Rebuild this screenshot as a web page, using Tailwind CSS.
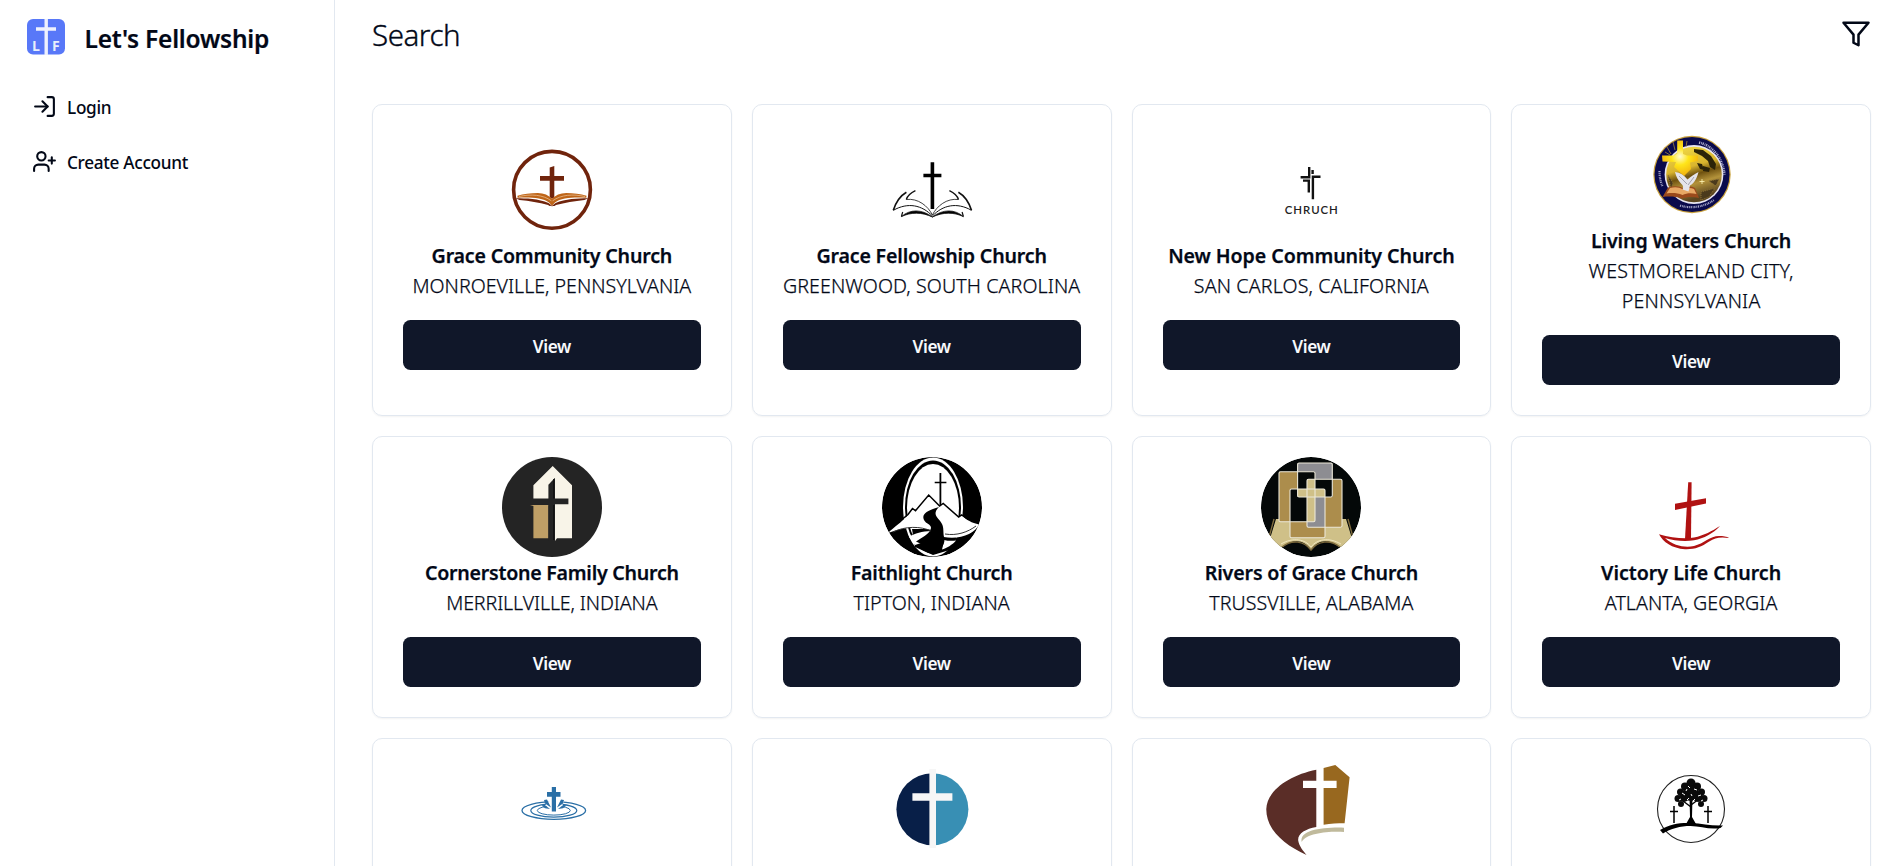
<!DOCTYPE html>
<html lang="en">
<head>
<meta charset="utf-8">
<title>Let's Fellowship</title>
<script src="https://cdn.jsdelivr.net/npm/@tailwindcss/browser@4"></script>
</head>
<body class="flex h-screen overflow-hidden bg-white font-['Noto_Sans','Open_Sans',sans-serif] text-[#020817]">

<aside class="w-[335px] shrink-0 border-r border-[#e2e8f0] pl-[27px] pt-[19px]">
  <div class="flex h-9 items-start">
    <svg class="h-9 w-[38px] shrink-0" viewBox="0 0 38 36">
      <rect width="38" height="35.6" rx="6" fill="#5878f8"/>
      <path d="M19.2 0v36M9 10h20" stroke="#eef1fd" stroke-width="3.4"/>
      <text x="5" y="31.5" font-family="Open Sans, sans-serif" font-weight="700" font-size="14" fill="#e8eefc">L</text>
      <text x="25" y="31.5" font-family="Open Sans, sans-serif" font-weight="700" font-size="14" fill="#e8eefc">F</text>
    </svg>
    <h1 class="ml-[19.5px] mt-px whitespace-nowrap text-[24.5px] font-semibold leading-[38px] tracking-[-0.23px] [-webkit-text-stroke:0.2px]">Let's Fellowship</h1>
  </div>
  <nav class="mt-[39px] flex flex-col gap-[30px] pl-[5px] text-[17.2px] font-medium">
    <a class="flex h-[25px] items-center gap-[10px]">
      <svg class="size-[25px]" viewBox="0 0 24 24" fill="none" stroke="currentColor" stroke-width="2" stroke-linecap="round" stroke-linejoin="round"><path d="M15 3h4a2 2 0 0 1 2 2v14a2 2 0 0 1-2 2h-4"/><path d="m10 17 5-5-5-5"/><path d="M15 12H3"/></svg>
      <span class="mt-[3px] tracking-[-0.3px]">Login</span>
    </a>
    <a class="flex h-[25px] items-center gap-[10px]">
      <svg class="size-[25px]" viewBox="0 0 24 24" fill="none" stroke="currentColor" stroke-width="2" stroke-linecap="round" stroke-linejoin="round"><path d="M16 21v-2a4 4 0 0 0-4-4H6a4 4 0 0 0-4 4v2"/><circle cx="9" cy="7" r="4"/><path d="M19 8v6M22 11h-6"/></svg>
      <span class="mt-[3px] tracking-[-0.3px]">Create Account</span>
    </a>
  </nav>
</aside>

<main class="flex min-w-0 flex-1 flex-col pl-[37px] pr-5">
  <header class="flex h-[104px] shrink-0 items-start justify-between pt-[12px]">
    <h2 class="text-[29.5px] font-light leading-[45px] tracking-[-0.45px] [-webkit-text-stroke:0.35px]">Search</h2>
    <svg class="mt-[7px] size-[30px]" viewBox="0 0 24 24" fill="none" stroke="currentColor" stroke-width="2" stroke-linecap="round" stroke-linejoin="round"><path d="M22 3H2l8 9.46V19l4 2v-8.54L22 3z"/></svg>
  </header>

  <div class="grid grid-cols-4 gap-5 text-center text-[19.6px] leading-[30px] [-webkit-text-stroke:0.25px]">

    <section class="flex h-[312px] flex-col items-center justify-center rounded-[10px] border border-[#e2e8f0] px-[30px] pb-[10px] shadow-[0_1px_2px_rgba(0,0,0,0.05)]">
      <svg class="mb-px size-[100px] shrink-0" viewBox="0 0 100 100">
        <circle cx="50" cy="49.8" r="38.4" fill="none" stroke="#70240c" stroke-width="3.6"/>
        <path d="M47.7 27.5l4.6-1.6V36H62v4.8h-9.7v16.6L50 58.8l-2.3-1.6V40.8H38V36h9.7z" fill="#70240c"/>
        <path d="M13.5 58.3c11 0 23 .5 33 4.6l3.5 2.8 3.6-2.8c9.8-4 21.4-4.6 32.8-4.6l-4 1.6c-10 1-19.5 2.7-28.5 5.2-1 1.6-6.6 1.6-7.8 0-9.5-2.8-18.3-4.2-28.6-5.2z" fill="#70240c"/>
        <path d="M15.5 55.8c6-2 13-2.6 20.3-2.8 6 .2 11 2.2 14.2 5.8 3.3-3.6 8.3-5.6 14.2-5.8 7.3 0 14.3.8 20.3 2.8l-.2 1.9c-10.4-.8-25.3-.4-31.3 4.7L50 65.8l-3-3.4c-6-5-21-5.4-31.5-4.7z" fill="#bf6518"/>
        <path d="M17 56.5c12-2.7 24-1.8 32.4 4.3M83 56.5c-12-2.7-24-1.8-32.4 4.3" fill="none" stroke="#f4d9b8" stroke-width=".6"/>
      </svg>
      <h3 class="whitespace-nowrap font-semibold tracking-[-0.19px]">Grace Community Church</h3>
      <p class="whitespace-nowrap font-light">MONROEVILLE, PENNSYLVANIA</p>
      <button class="mt-[19px] h-[50px] w-full shrink-0 rounded-[7.5px] bg-[#101729] pt-[3px] text-[17.2px] font-semibold tracking-[-0.35px] text-slate-50 [-webkit-text-stroke:0]">View</button>
    </section>

    <section class="flex h-[312px] flex-col items-center justify-center rounded-[10px] border border-[#e2e8f0] px-[30px] pb-[10px] shadow-[0_1px_2px_rgba(0,0,0,0.05)]">
      <svg class="mb-px size-[100px] shrink-0" viewBox="0 0 100 100">
        <path d="M50.4 22.3V69M41.4 35.5h18" stroke="#000" stroke-width="3.6" fill="none"/>
        <g id="wing" fill="none" stroke="#111" stroke-linejoin="round">
          <path d="M24.4 52.3C18 56 14 62 11.3 70.3" stroke-width="1.6"/>
          <path d="M11.3 70.3C26 62 40 65 50.4 76" stroke-width="1"/>
          <path d="M33.4 50.7C28.5 53 25.5 56 24.3 59.5" stroke-width="1.4"/>
          <path d="M24.3 59.5C36 58 46 66 50.4 75" stroke-width=".8"/>
          <path d="M20.7 72l-1.3 4.500" stroke-width="1.2"/>
          <path d="M19.4 76.6C28 69 40 69 50.4 77C40 72 29 72 19.4 76.6z" fill="#000" stroke-width=".8"/>
        </g>
        <use href="#wing" transform="translate(100.8 0) scale(-1 1)"/>
      </svg>
      <h3 class="whitespace-nowrap font-semibold tracking-[-0.17px]">Grace Fellowship Church</h3>
      <p class="whitespace-nowrap font-light tracking-[0.1px]">GREENWOOD, SOUTH CAROLINA</p>
      <button class="mt-[19px] h-[50px] w-full shrink-0 rounded-[7.5px] bg-[#101729] pt-[3px] text-[17.2px] font-semibold tracking-[-0.35px] text-slate-50 [-webkit-text-stroke:0]">View</button>
    </section>

    <section class="flex h-[312px] flex-col items-center justify-center rounded-[10px] border border-[#e2e8f0] px-[30px] pb-[10px] shadow-[0_1px_2px_rgba(0,0,0,0.05)]">
      <svg class="mb-px size-[100px] shrink-0" viewBox="0 0 100 100">
        <path d="M39.6 37.2h8.600V27M51.600 30v4M59.500 36.700h-7.600v22.500M42 40.600h5.800v12" fill="none" stroke="#111" stroke-width="2.400"/>
        <text x="23.800" y="74" textLength="53" lengthAdjust="spacing" font-family="Lato, sans-serif" font-weight="600" font-size="11.400" fill="#222">CHRUCH</text>
      </svg>
      <h3 class="whitespace-nowrap font-semibold tracking-[-0.07px]">New Hope Community Church</h3>
      <p class="whitespace-nowrap font-light tracking-[0.13px]">SAN CARLOS, CALIFORNIA</p>
      <button class="mt-[19px] h-[50px] w-full shrink-0 rounded-[7.5px] bg-[#101729] pt-[3px] text-[17.2px] font-semibold tracking-[-0.35px] text-slate-50 [-webkit-text-stroke:0]">View</button>
    </section>

    <section class="flex h-[312px] flex-col items-center justify-center rounded-[10px] border border-[#e2e8f0] px-[30px] pb-[10px] shadow-[0_1px_2px_rgba(0,0,0,0.05)]">
      <svg class="mb-px size-[100px] shrink-0" viewBox="0 0 100 100">
        <defs>
          <linearGradient id="globe" x1="0" y1="0" x2=".3" y2="1"><stop offset="0" stop-color="#f6e04a"/><stop offset=".45" stop-color="#d9b52e"/><stop offset=".6" stop-color="#6f5210"/><stop offset=".75" stop-color="#b3923a"/><stop offset="1" stop-color="#5a4520"/></linearGradient>
          <radialGradient id="gold" cx=".5" cy=".45" r=".6"><stop offset="0" stop-color="#fffbd0"/><stop offset=".4" stop-color="#ffe51a"/><stop offset="1" stop-color="#efa90c"/></radialGradient>
        </defs>
        <circle cx="51" cy="49.5" r="38.7" fill="#c9a13c"/>
        <circle cx="51" cy="49.5" r="37.5" fill="#0a0a4c"/>
        <circle cx="53" cy="49.5" r="29.4" fill="#e9e6f2"/>
        <circle cx="53" cy="49.5" r="27.8" fill="url(#globe)"/>
        <path d="M53 24l9 1 8 6 5 8-1 6-5-3-2-6-6-5-8-4zM56 38l5 1 2 6-4-1zM62 41l7 2-1 4-6-1z" fill="#2c2408"/>
        <path d="M60 67l14-4-6 9-8 3zM68 56l10-2-3 7zM27 50l5 8-2 6z" fill="#4b3a1c" stroke="#8f7436" stroke-width="1" stroke-dasharray="1 1"/>
        <path d="M58 17.5C70 20 82 32 83.5 50" fill="none" stroke="#a9a9c9" stroke-width="2.6" stroke-dasharray="1.3 .9 .8 .7"/>
        <path d="M39 80.500C50 84 63 82 73 75" fill="none" stroke="#a9a9c9" stroke-width="2.2" stroke-dasharray="1.2 .9 .8 .7"/>
        <path d="M18.5 46c0 6 1 11 3 15" fill="none" stroke="#a9a9c9" stroke-width="2.2" stroke-dasharray="1.2 .9 .8 .7"/>
        <path d="M26 22l4 7M32 17l2 8M46 16l-1 6M24 27l5 3" stroke="#a58a3a" stroke-width=".8"/>
        <path d="M36.2 15.5H42V29l4 1.500h11V36l-8 1.500L50 44l-7 7-10-9 2-5-13.500-.5-.5-6H33l3.200-2z" fill="url(#gold)"/>
        <path d="M21.5 72L27 62.500c6-2 12-1.500 15.500 1C46 61 50 61 54 63l4 10c-6-1.500-12-1.500-17 .5-6-2-13-2.500-19.500-1.500z" fill="#9b4a1c"/>
        <path d="M25.500 68.500L29 63c5-1.500 9-1 13 1.500 4-2 8-2 11-.5l2.500 5c-5-1-10-1-14 1-5-2-10-2.500-16-1.500z" fill="#e8a865"/>
        <path d="M34 47c5 .5 9 3 12.500 7.500C50 51 54 49 57.500 47c-1.500 6-4 11-8.500 13.500l-1.500 6-6-2c1-2 1-4-1.500-6-3-3-5-7-6-11.500z" fill="#e4e4ea"/>
        <path d="M38 51l8 8M53 52l-6 8" stroke="#9b9ba6" stroke-width=".9"/>
        <path d="M61 54v5M58.500 56.500h5" stroke="#fff6b8" stroke-width=".8"/>
      </svg>
      <h3 class="whitespace-nowrap font-semibold tracking-[-0.13px]">Living Waters Church</h3>
      <p class="font-light tracking-[0.17px]">WESTMORELAND CITY, PENNSYLVANIA</p>
      <button class="mt-[19px] h-[50px] w-full shrink-0 rounded-[7.5px] bg-[#101729] pt-[3px] text-[17.2px] font-semibold tracking-[-0.35px] text-slate-50 [-webkit-text-stroke:0]">View</button>
    </section>

    <section class="flex h-[282px] flex-col items-center rounded-[10px] border border-[#e2e8f0] px-[30px] pt-5 shadow-[0_1px_2px_rgba(0,0,0,0.05)]">
      <svg class="mb-px size-[100px] shrink-0" viewBox="0 0 100 100">
        <circle cx="50" cy="50" r="50" fill="#242424"/>
        <path d="M50.7 9L70 28.300v53H55l-2 2.700V48.500h-2L31.400 47V28.300z" fill="#f8f4e8"/>
        <path d="M28 48h18.400v33.300h-15V49z" fill="#bf9f66"/>
        <path d="M46.400 27.700L53 20.700v20.800h13.400v5.800H53V84h-6.600V48H29.500v-6.500h16.900z" fill="#242424"/>
        <path d="M51.800 22v19.500M51.800 48v35" stroke="#111" stroke-width="1.400"/>
      </svg>
      <h3 class="whitespace-nowrap font-semibold tracking-[-0.25px]">Cornerstone Family Church</h3>
      <p class="whitespace-nowrap font-light tracking-[-0.12px]">MERRILLVILLE, INDIANA</p>
      <button class="mt-[19px] h-[50px] w-full shrink-0 rounded-[7.5px] bg-[#101729] pt-[3px] text-[17.2px] font-semibold tracking-[-0.35px] text-slate-50 [-webkit-text-stroke:0]">View</button>
    </section>

    <section class="flex h-[282px] flex-col items-center rounded-[10px] border border-[#e2e8f0] px-[30px] pt-5 shadow-[0_1px_2px_rgba(0,0,0,0.05)]">
      <svg class="mb-px size-[100px] shrink-0" viewBox="0 0 100 100">
        <clipPath id="fc"><circle cx="50" cy="50" r="50"/></clipPath>
        <g clip-path="url(#fc)">
          <circle cx="50" cy="50" r="50" fill="#000"/>
          <ellipse cx="51" cy="50" rx="30" ry="49.500" fill="#fff"/>
          <ellipse cx="51" cy="50" rx="28" ry="46.500" fill="#000"/>
          <ellipse cx="51" cy="50.500" rx="26" ry="43.500" fill="#fff"/>
          <path d="M30 72h47l-6 20-20 6-18-8z" fill="#000"/>
          <path d="M27 80c6-4 13-5.500 22-6l-10 12-6 2zM62 83c4 1 8 1 12 .5-3 4-10 8-14 9l1-4z" fill="#fff"/>
          <path d="M6 76c6-6 14-11 19-17l5.500-7.500 3 2.200L46.700 38 57.600 49l3.600-2.500L76.700 60l3-2c5 5 10 8 17.300 9.500-4 9-19 15.500-35.300 12.500L49 73C33 68 20 71 6 76z" fill="#fff"/>
          <path d="M18 64l8-6.500 4.500-6 3 2.200L46.700 38l10.900 11 3.600-2.500L76.700 60l3-2 7 5" fill="none" stroke="#000" stroke-width="1.500"/>
          <path d="M57 50C46 53 39 57 42 63c2 4 7 4 7 8-1 6-10 10-15 13.500 7 3 14 8 20 12.500 5-6 10-10 8-17-1-5 0-9-2-13-3-6-11-9-3-17z" fill="#000"/>
          <path d="M11 75c12-6 28-6 38-1M63 77c12 2 23-2 31-8" fill="none" stroke="#333" stroke-width="1"/>
          <path d="M58.400 16v32" stroke="#000" stroke-width="1.800"/>
          <path d="M52.700 25.500h11.700" stroke="#000" stroke-width="1.700"/>
        </g>
      </svg>
      <h3 class="whitespace-nowrap font-semibold tracking-[-0.17px]">Faithlight Church</h3>
      <p class="whitespace-nowrap font-light tracking-[0.06px]">TIPTON, INDIANA</p>
      <button class="mt-[19px] h-[50px] w-full shrink-0 rounded-[7.5px] bg-[#101729] pt-[3px] text-[17.2px] font-semibold tracking-[-0.35px] text-slate-50 [-webkit-text-stroke:0]">View</button>
    </section>

    <section class="flex h-[282px] flex-col items-center rounded-[10px] border border-[#e2e8f0] px-[30px] pt-5 shadow-[0_1px_2px_rgba(0,0,0,0.05)]">
      <svg class="mb-px size-[100px] shrink-0" viewBox="0 0 100 100">
        <clipPath id="rc"><circle cx="50" cy="50" r="50"/></clipPath>
        <g clip-path="url(#rc)">
          <circle cx="50" cy="50" r="50" fill="#040808"/>
          <path d="M15 62h70l8 26-15 2c-10-9-22-7-28 3-6-10-18-12-28-3L7 88z" fill="#cfc088"/>
          <path d="M20 87c12-7 24-5 30 3 6-8 18-10 30-3" fill="none" stroke="#efe6c0" stroke-width="1"/>
          <path d="M13 62L7 84M87 62l6 22M21 90c10-8 22-6 29 3 7-9 19-11 29-3" fill="none" stroke="#7d6a3c" stroke-width="1.400"/>
          <path d="M18 14.700h36v50H18z" fill="#ac8d4c"/>
          <path d="M46 22.300h35v48H46z" fill="#ac8d4c"/>
          <path d="M29 32h35v48.700H29z" fill="#ac8d4c"/>
          <path d="M36.600 6h34.700v34H36.600z" fill="#8d8d92"/>
          <path d="M36.600 14.700H54v7.600h-8V32h-9.400zM54 22.300h17.300V40H64v-8H54zM29 32h7.600v8H46v24.700H29z" fill="#040808"/>
          <path d="M54 40h10v30.300H46v-5.600h8z" fill="#8d8d92"/>
          <path d="M46 22.300h8V32h10v8H54v24.700h-8V40h-9.400v-8H46z" fill="#cfc088"/>
          <g fill="none" stroke="#ece8d8" stroke-width="1.100">
            <rect x="18" y="14.700" width="36" height="50" rx="1.500"/>
            <rect x="36.600" y="6" width="34.700" height="34" rx="1.500"/>
            <rect x="46" y="22.300" width="35" height="48" rx="1.500"/>
            <rect x="29" y="32" width="35" height="48.700" rx="1.500"/>
          </g>
        </g>
      </svg>
      <h3 class="whitespace-nowrap font-semibold tracking-[-0.13px]">Rivers of Grace Church</h3>
      <p class="whitespace-nowrap font-light tracking-[0.06px]">TRUSSVILLE, ALABAMA</p>
      <button class="mt-[19px] h-[50px] w-full shrink-0 rounded-[7.5px] bg-[#101729] pt-[3px] text-[17.2px] font-semibold tracking-[-0.35px] text-slate-50 [-webkit-text-stroke:0]">View</button>
    </section>

    <section class="flex h-[282px] flex-col items-center rounded-[10px] border border-[#e2e8f0] px-[30px] pt-5 shadow-[0_1px_2px_rgba(0,0,0,0.05)]">
      <svg class="mb-px size-[100px] shrink-0" viewBox="0 0 100 100">
        <g fill="#b01212">
          <path d="M47.200 25.300h3.400L50 82h-6z"/>
          <path d="M34 46.700L65 41.300v5.300L34 53z"/>
          <path d="M18 77.300C30 81 45 82 53 80.500 63 78.500 71 74 79 69c-7 7.500-16 12.500-26 14.300-9 1.500-20 .5-29-2.300 9 8 20 10 29 8 10-2.500 16-10 25-10 4 0 8 .5 10.200 2-10-1.500-14 0-20 3.500C60 90 54 92.500 44 92.200 31 91.500 22 85 18 77.300z"/>
        </g>
      </svg>
      <h3 class="whitespace-nowrap font-semibold">Victory Life Church</h3>
      <p class="whitespace-nowrap font-light tracking-[0.06px]">ATLANTA, GEORGIA</p>
      <button class="mt-[19px] h-[50px] w-full shrink-0 rounded-[7.5px] bg-[#101729] pt-[3px] text-[17.2px] font-semibold tracking-[-0.35px] text-slate-50 [-webkit-text-stroke:0]">View</button>
    </section>

    <section class="flex h-[282px] flex-col items-center rounded-[10px] border border-[#e2e8f0] px-[30px] pt-5 shadow-[0_1px_2px_rgba(0,0,0,0.05)]">
      <svg class="size-[100px] shrink-0" viewBox="0 0 100 100">
        <g fill="none" stroke="#2a6fa6">
          <ellipse cx="51.800" cy="51.500" rx="31.800" ry="8.800" stroke-width="1.300"/>
          <ellipse cx="51.800" cy="51.500" rx="23" ry="6.600" stroke-width="1.200"/>
          <ellipse cx="51.800" cy="51.500" rx="16.500" ry="4.600" stroke-width="1"/>
        </g>
        <path d="M43 43l14-3 5 2-4 10H46z" fill="#fff"/>
        <g fill="#2a6fa6">
          <path d="M49.800 28H54v5h4.500v4.700H54v14.800h-4.200V37.700H45V33h4.800z"/>
          <path d="M42 41l3-.5 4 8-6-4zM62 41l-3-.5-4 8 6-4zM39.500 46.500l3-.8 5.500 4.300-5-.7zM64.500 46.500l-3-.8-5.500 4.300 5-.7z"/>
        </g>
      </svg>
    </section>

    <section class="flex h-[282px] flex-col items-center rounded-[10px] border border-[#e2e8f0] px-[30px] pt-5 shadow-[0_1px_2px_rgba(0,0,0,0.05)]">
      <svg class="size-[100px] shrink-0" viewBox="0 0 100 100">
        <path d="M50.400 14.300a36 36 0 0 0 0 72z" fill="#081f48"/>
        <path d="M50.400 14.300a36 36 0 0 1 0 72z" fill="#388fb4"/>
        <path d="M47.400 10H54v24.300h16.400v7.400H54V89h-6.600V41.700h-17v-7.400h17z" fill="#f6f6f6"/>
      </svg>
    </section>

    <section class="flex h-[282px] flex-col items-center rounded-[10px] border border-[#e2e8f0] px-[30px] pt-5 shadow-[0_1px_2px_rgba(0,0,0,0.05)]">
      <svg class="size-[100px] shrink-0" viewBox="0 0 100 100">
        <path d="M55.300 10.700v11H42V29h13.300v39C44 70 36 75 37.300 82c.8 5 5 10 8.300 14C22 85 5 70 5.300 50 6 31 29 16 55.300 10.700z" fill="#5a2d27"/>
        <path d="M62.600 9l11.700-3 14.300 12.300-5 46c-7 0-14 .3-21 1.500V29h13v-7.300h-13z" fill="#98681f"/>
        <path d="M83 68.700V73c-16-.8-37 1-42.300 10C38 71 62 68 83 68.700z" fill="#c0ba9c"/>
      </svg>
    </section>

    <section class="flex h-[282px] flex-col items-center rounded-[10px] border border-[#e2e8f0] px-[30px] pt-5 shadow-[0_1px_2px_rgba(0,0,0,0.05)]">
      <svg class="size-[100px] shrink-0" viewBox="0 0 100 100">
        <circle cx="50" cy="50" r="33.500" fill="none" stroke="#222" stroke-width="1.100"/>
        <path d="M19 71c10-6 20-7.500 31-7 11 .5 20 3 32 2.500l-2.500 2.500c-11 2-20-2-30-2-10 0-20 2.500-27.500 7.500z" fill="#000"/>
        <path d="M48.500 38h3L51 58l4 7H45l4-7z" fill="#000"/>
        <path d="M50 48l-8-6M50 46l8-6" stroke="#000" stroke-width="1.400"/>
        <g fill="#0a0a0a"><circle cx="50" cy="24" r="4.500"/><circle cx="44" cy="27.500" r="4"/><circle cx="56" cy="27.500" r="4"/><circle cx="39.500" cy="33" r="3.500"/><circle cx="60.500" cy="33" r="3.500"/><circle cx="37" cy="39.500" r="3.500"/><circle cx="63" cy="39.500" r="3.500"/><circle cx="50" cy="34" r="8"/><circle cx="43" cy="38" r="5"/><circle cx="57" cy="38" r="5"/><circle cx="40" cy="45" r="3"/><circle cx="60" cy="45" r="3"/></g>
        <path d="M41 34l3 2M53 30l3 1M47 27l2 2M57 37l3-1M46 41l2-2M52 42l2-2M38 41l2-1M45 32l1-2M60 42l2-1M50 35l1 2" stroke="#fff" stroke-width="1"/>
        <path d="M33 47v17M29 52.500h8M67 47v17M63 52.500h8" stroke="#000" stroke-width="1.500"/>
      </svg>
    </section>
  </div>
</main>
</body>
</html>
